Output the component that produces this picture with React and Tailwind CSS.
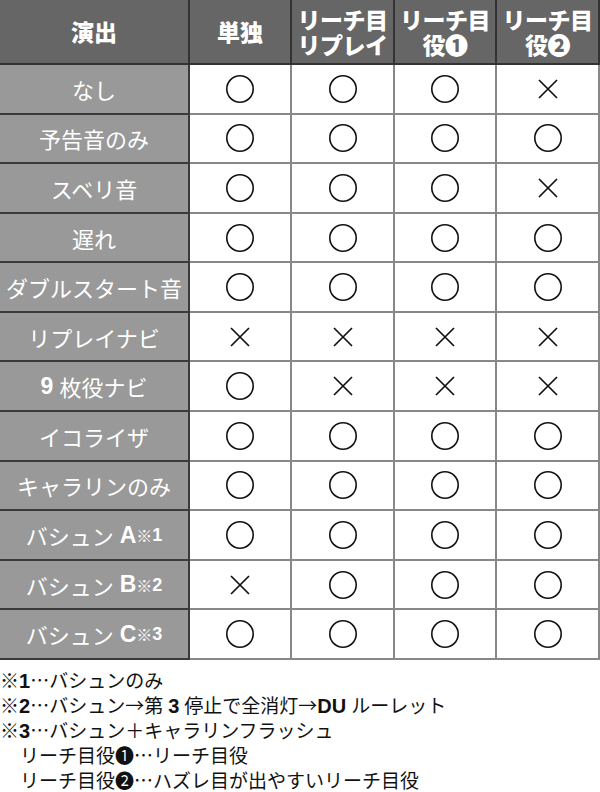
import React from "react";

const JP = { fontFamily: '"Noto Sans CJK JP", "Noto Sans", sans-serif' };
const LAT = "font-['Liberation_Sans',Arial,sans-serif] font-bold leading-none";

function Circle() {
  return (
    <svg width="30" height="30" viewBox="0 0 30 30">
      <circle cx="15" cy="15" r="13.2" fill="none" stroke="#111" strokeWidth="1.6" />
    </svg>
  );
}

function Cross() {
  return (
    <svg width="22" height="22" viewBox="0 0 22 22">
      <path d="M2 2 L20 20 M20 2 L2 20" stroke="#111" strokeWidth="1.7" fill="none" />
    </svg>
  );
}

const Bash = ({ l, n }) => (
  <>
    バシュン
    <span className={`${LAT} text-[23px] ml-[6px]`}>{l}</span>
    <span className="font-bold text-[16px] leading-none">※</span>
    <span className={`${LAT} text-[18px]`}>{n}</span>
  </>
);

const rows = [
  { label: <>なし</>, v: [1, 1, 1, 0] },
  { label: <>予告音のみ</>, v: [1, 1, 1, 1] },
  { label: <>スベリ音</>, v: [1, 1, 1, 0] },
  { label: <>遅れ</>, v: [1, 1, 1, 1] },
  { label: <>ダブルスタート音</>, v: [1, 1, 1, 1] },
  { label: <>リプレイナビ</>, v: [0, 0, 0, 0] },
  {
    label: (
      <>
        <span className={`${LAT} text-[23px] mr-[6px]`}>9</span>枚役ナビ
      </>
    ),
    v: [1, 0, 0, 0],
  },
  { label: <>イコライザ</>, v: [1, 1, 1, 1] },
  { label: <>キャラリンのみ</>, v: [1, 1, 1, 1] },
  { label: <Bash l="A" n="1" />, v: [1, 1, 1, 1] },
  { label: <Bash l="B" n="2" />, v: [0, 1, 1, 1] },
  { label: <Bash l="C" n="3" />, v: [1, 1, 1, 1] },
];

const headers = [
  ["リーチ目", "リプレイ"],
  ["リーチ目", "役❶"],
  ["リーチ目", "役❷"],
];

export default function App() {
  return (
    <div className="w-[600px] h-[792px] bg-white overflow-hidden" style={JP} lang="ja">
      <div className="grid grid-cols-[190px_102px_103px_102px_103px] grid-rows-[65px_repeat(12,minmax(0,1fr))] h-[660px]">
        <div className="bg-[#666] border-r-2 border-b-2 border-[#333] flex items-center justify-center text-white font-black text-[23px]">
          演出
        </div>
        <div className="bg-[#666] border-r-2 border-b-2 border-[#333] flex items-center justify-center text-white font-black text-[23px]">
          単独
        </div>
        {headers.map((h, i) => (
          <div
            key={i}
            className="bg-[#666] border-r-2 border-b-2 border-[#333] flex flex-col items-center justify-center text-white font-black text-[23px] leading-[25px] tracking-[-0.5px] whitespace-nowrap"
          >
            <span>{h[0]}</span>
            <span>{h[1]}</span>
          </div>
        ))}
        {rows.map((r, i) => (
          <React.Fragment key={i}>
            <div className="bg-[#999] border-r-2 border-b-2 border-[#3a3a3a] flex items-center justify-center text-white text-[22px] leading-none whitespace-nowrap">
              {r.label}
            </div>
            {r.v.map((x, j) => (
              <div
                key={j}
                className="bg-white border-r-2 border-b-2 border-[#888] flex items-center justify-center"
              >
                {x ? <Circle /> : <Cross />}
              </div>
            ))}
          </React.Fragment>
        ))}
      </div>
      <div className="pt-[7px] text-[19px] text-[#111] whitespace-nowrap">
        <div className="h-[25px] leading-[25px]">
          ※<span className={`${LAT} text-[20px]`}>1</span>…バシュンのみ
        </div>
        <div className="h-[25px] leading-[25px]">
          ※<span className={`${LAT} text-[20px]`}>2</span>…バシュン→第
          <span className={`${LAT} text-[20px] mx-[5px]`}>3</span>停止で全消灯→
          <span className={`${LAT} text-[20px] mr-[5px]`}>DU</span>ルーレット
        </div>
        <div className="h-[25px] leading-[25px]">
          ※<span className={`${LAT} text-[20px]`}>3</span>…バシュン＋キャラリンフラッシュ
        </div>
        <div className="h-[25px] leading-[25px] pl-[20px]">リーチ目役❶…リーチ目役</div>
        <div className="h-[25px] leading-[25px] pl-[20px]">リーチ目役❷…ハズレ目が出やすいリーチ目役</div>
      </div>
    </div>
  );
}
